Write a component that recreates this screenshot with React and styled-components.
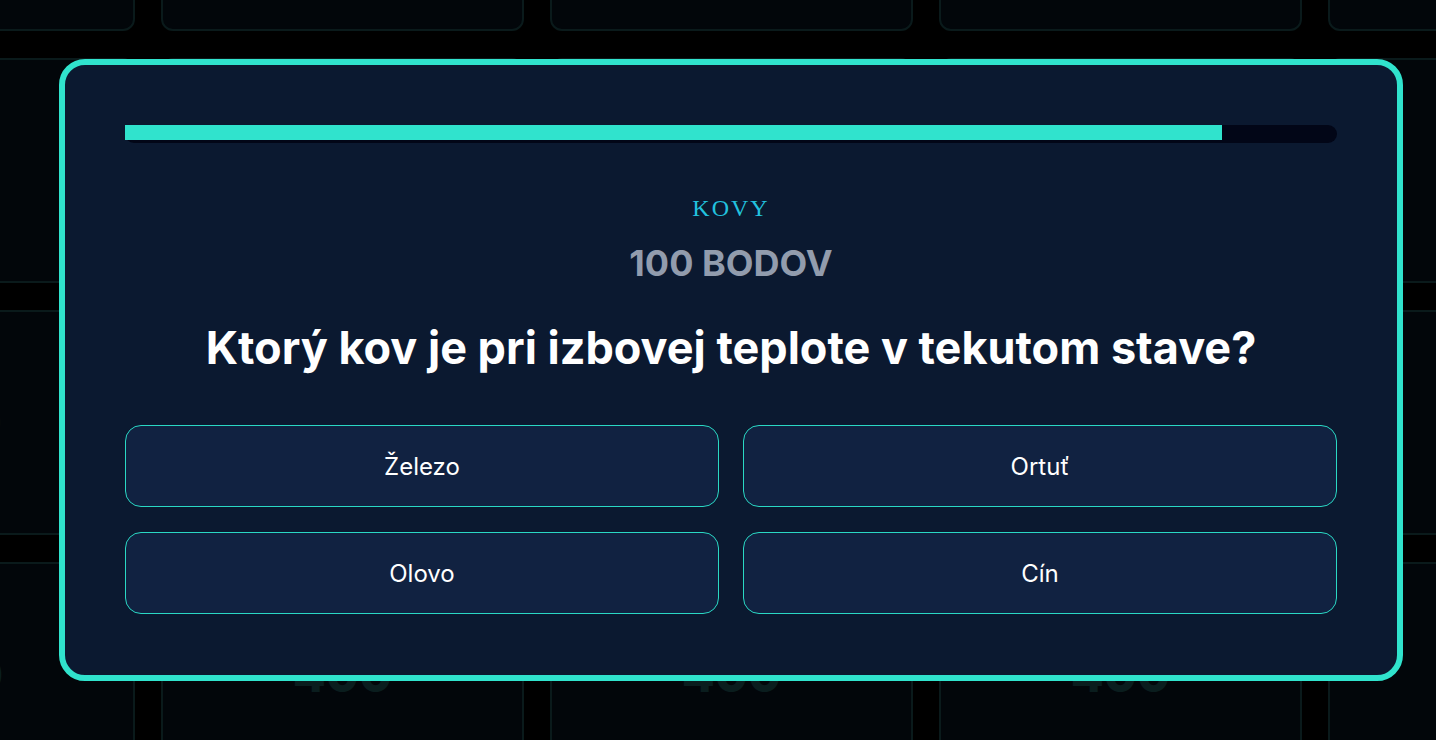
import React from "react";
import styled, { createGlobalStyle } from "styled-components";

const categories = ["Zvieratá", "Kovy", "Planéty", "Rieky", "Hudba"];
const values = [100, 200, 400];

const question = {
  category: "Kovy",
  points: 100,
  text: "Ktorý kov je pri izbovej teplote v tekutom stave?",
  answers: ["Železo", "Ortuť", "Olovo", "Cín"],
  progress: 90.5,
};

const App = () => {
  return (
    <>
      <GlobalStyle />
      <Page>
        <Board>
          {categories.map((c) => (
            <Cell key={c} />
          ))}
          {values.map((v) =>
            categories.map((c) => (
              <Cell key={c + v}>
                <CellValue>{v}</CellValue>
              </Cell>
            ))
          )}
        </Board>
      </Page>
      <Overlay>
        <Modal>
          <Track>
            <Fill style={{ width: `${question.progress}%` }} />
          </Track>
          <Category>{question.category}</Category>
          <Points>{question.points} BODOV</Points>
          <Question>{question.text}</Question>
          <Answers>
            {question.answers.map((a) => (
              <Answer key={a}>{a}</Answer>
            ))}
          </Answers>
        </Modal>
      </Overlay>
    </>
  );
};

export default App;

const GlobalStyle = createGlobalStyle`
  html, body {
    margin: 0;
    padding: 0;
    background: #000;
    overflow: hidden;
  }
  * {
    box-sizing: border-box;
  }
`;

const Page = styled.main`
  width: 1436px;
  height: 740px;
  overflow: hidden;
  background: #000;
`;

const Board = styled.div`
  display: grid;
  grid-template-columns: repeat(5, 363px);
  grid-auto-rows: 225px;
  column-gap: 26px;
  row-gap: 27px;
  margin-top: -194px;
  margin-left: -228px;
`;

const Cell = styled.div`
  background: #02060a;
  border: 2px solid #0a1a1b;
  border-radius: 12px;
  display: flex;
  align-items: center;
  justify-content: center;
`;

const CellValue = styled.span`
  font-family: Inter, "Liberation Sans", sans-serif;
  font-weight: 800;
  font-size: 48px;
  color: #0a1d1e;
`;

const Overlay = styled.div`
  position: fixed;
  inset: 0;
  display: flex;
  align-items: center;
  justify-content: center;
  padding: 59px 33px 59px 59px;
`;

const Modal = styled.section`
  width: 1344px;
  height: 622px;
  background: #0b1930;
  border: 6px solid #30e3cd;
  border-radius: 26px;
  padding: 60px;
  display: flex;
  flex-direction: column;
  align-items: stretch;
`;

const Track = styled.div`
  height: 18px;
  background: #020617;
  border-radius: 9px;
`;

const Fill = styled.div`
  height: 15px;
  background: #30e3cd;
`;

const Category = styled.div`
  margin-top: 53px;
  font-family: "Liberation Serif", "DejaVu Serif", serif;
  font-size: 24px;
  line-height: 24px;
  letter-spacing: 2px;
  text-transform: uppercase;
  text-align: center;
  color: #22c1de;
`;

const Points = styled.div`
  margin-top: 25px;
  font-family: Inter, "Liberation Sans", sans-serif;
  font-weight: 700;
  font-size: 36px;
  line-height: 36px;
  text-align: center;
  color: #929cad;
`;

const Question = styled.h2`
  margin: 40px 0 0;
  font-family: Inter, "Liberation Sans", sans-serif;
  font-weight: 700;
  font-size: 45px;
  line-height: 54px;
  text-align: center;
  color: #ffffff;
`;

const Answers = styled.div`
  margin-top: 50px;
  display: grid;
  grid-template-columns: 1fr 1fr;
  grid-auto-rows: 82px;
  column-gap: 24px;
  row-gap: 25px;
`;

const Answer = styled.button`
  background: #112241;
  border: 1px solid #2ad8c4;
  border-radius: 16px;
  font-family: Inter, "Liberation Sans", sans-serif;
  font-size: 24px;
  font-weight: 400;
  color: #ffffff;
  cursor: pointer;
`;
